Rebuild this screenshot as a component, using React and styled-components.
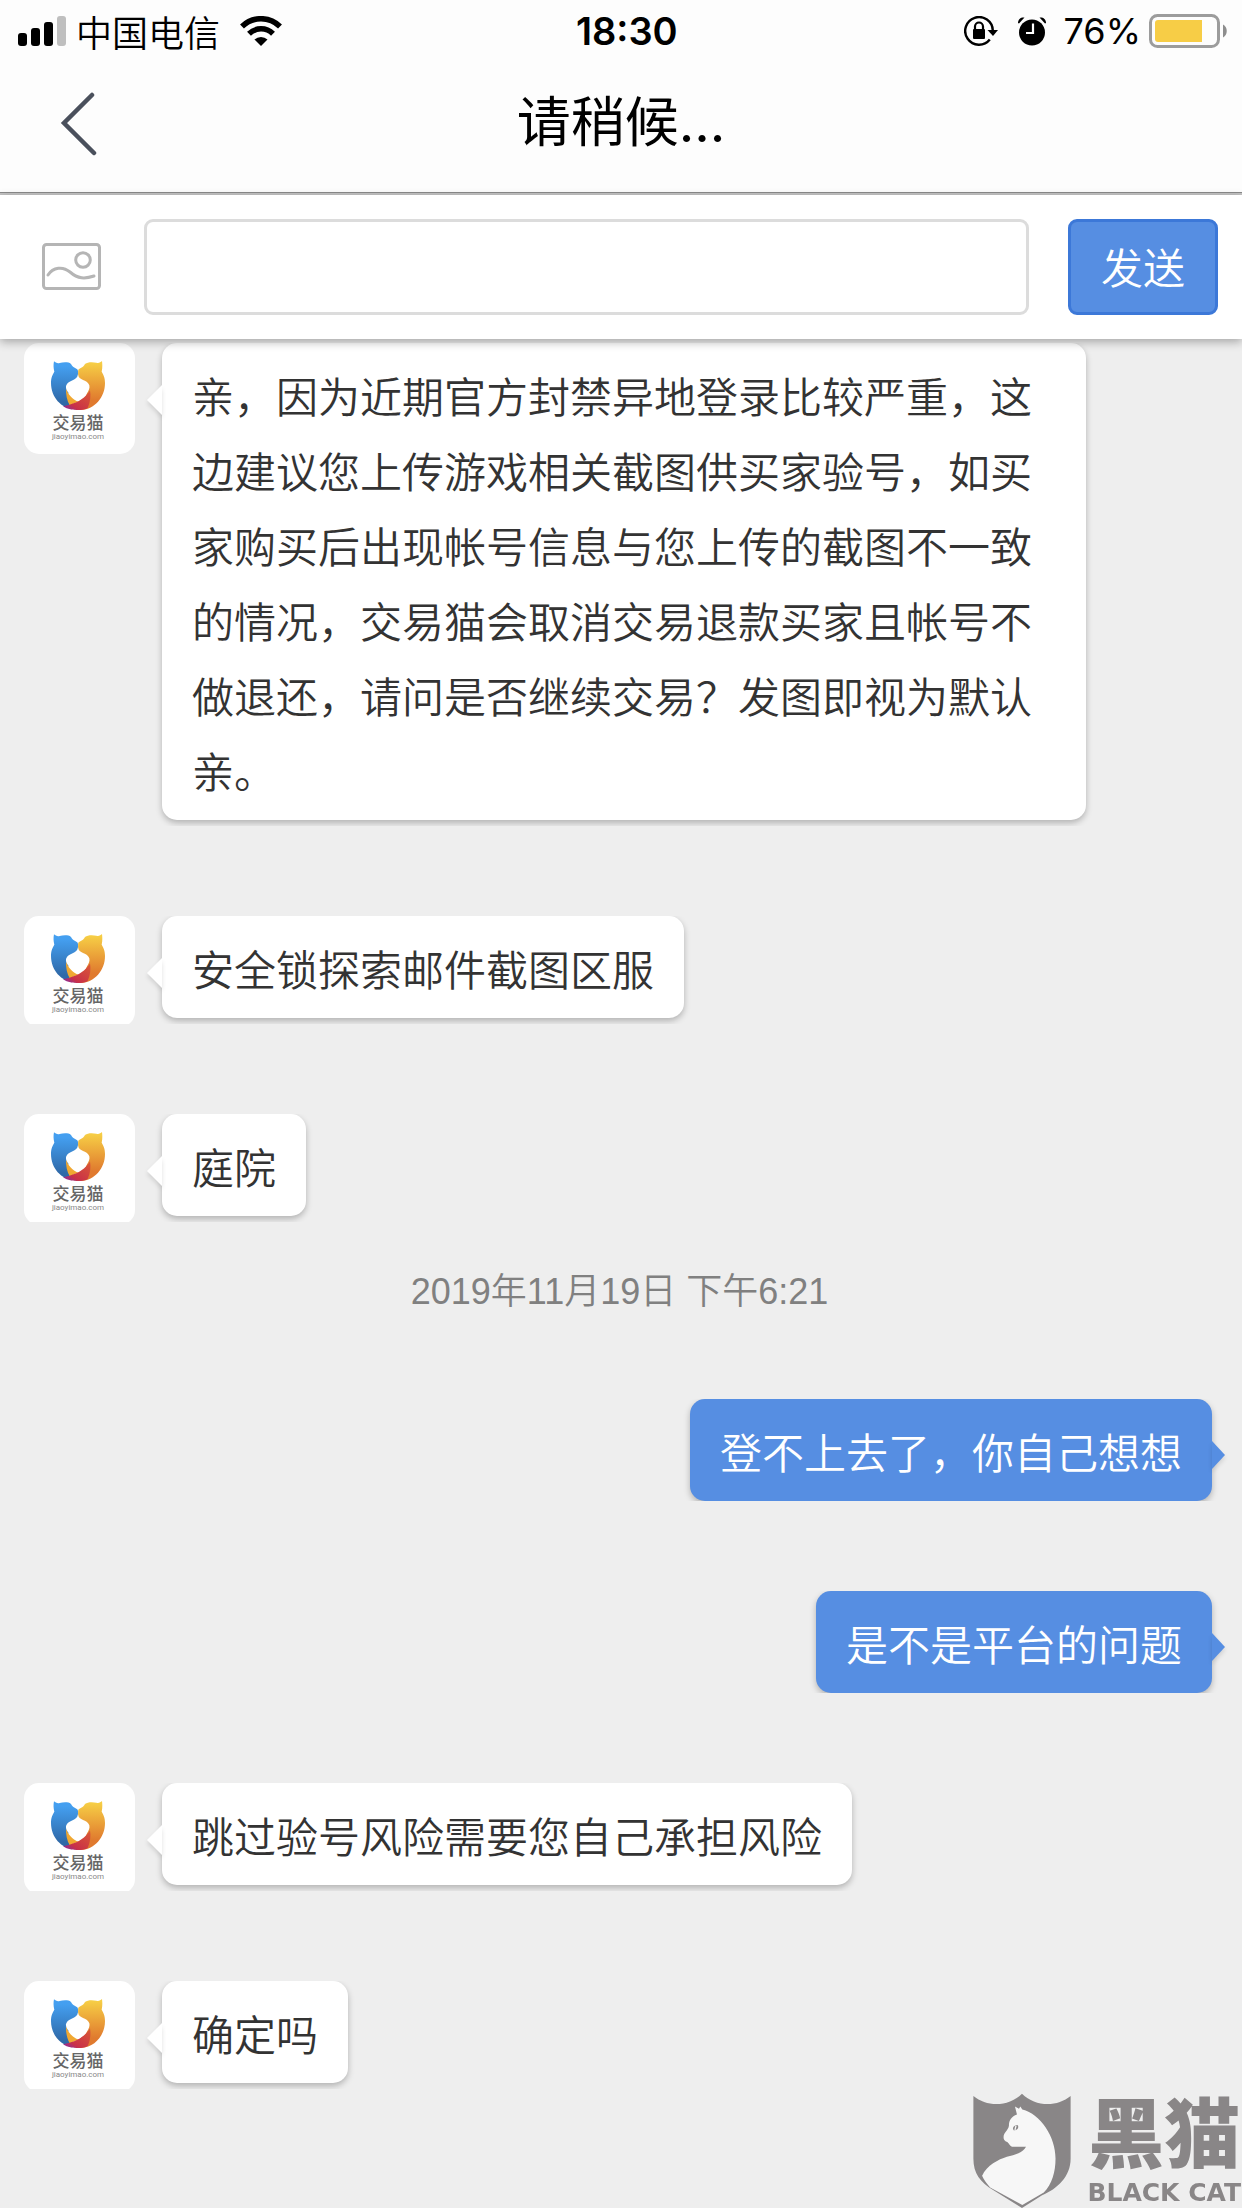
import React, { useState } from 'react';
import styled, { createGlobalStyle } from 'styled-components';

const GlobalStyle = createGlobalStyle`
    * {
        box-sizing: border-box;
    }

    body {
        margin: 0;
        background-color: #eeeeee;
        font-family: Inter, 'Noto Sans CJK SC', sans-serif;
    }

    button, input {
        font-family: inherit;
    }
`;

const Page = styled.div`
    min-height: 100vh;
    display: flex;
    flex-direction: column;
    background-color: #eeeeee;
`;

const StyledHeader = styled.header`
    background-color: #fdfdfd;
    border-bottom: 2px solid #c4c4c4;

    .status-bar {
        height: 60px;
        padding: 1px 15px 0 18px;
        display: flex;
        justify-content: space-between;
        align-items: center;
        font-size: 36px;
        line-height: 58px;
        color: #000000;
    }

    .status-group {
        display: flex;
        align-items: center;
    }

    .carrier {
        margin: 0 20px 0 10px;
        font-family: 'Noto Sans CJK SC', sans-serif;
        font-weight: 350;
    }

    .clock {
        padding-left: 8px;
        font-size: 38px;
        font-weight: 600;
    }

    .alarm {
        margin: 0 18px 0 20px;
    }

    .battery {
        margin-left: 8px;
    }

    .nav-bar {
        height: 133px;
        padding: 0 54px 6px;
        display: grid;
        grid-template-columns: 60px 1fr 60px;
        align-items: center;
        border-bottom: 1px solid #8a8a8a;
    }

    h1 {
        margin: 0;
        font-size: 54px;
        line-height: 78px;
        font-weight: 400;
        text-align: center;
        color: #000000;
    }
`;

const IconButton = styled.button`
    padding: 0;
    border: none;
    background: none;
    display: flex;
    align-items: center;
    cursor: pointer;
`;

const Composer = styled.form`
    position: relative;
    z-index: 1;
    padding: 24px 24px 24px 42px;
    display: flex;
    align-items: center;
    background-color: #ffffff;
    box-shadow: 0 3px 9px rgba(0, 0, 0, 0.3);

    input {
        flex: 1;
        min-width: 0;
        height: 96px;
        margin: 0 39px 0 43px;
        padding: 0 24px;
        border: 3px solid #dcdcdc;
        border-radius: 9px;
        font-size: 42px;
        color: #333333;
        outline: none;
    }
`;

const SendButton = styled.button`
    height: 96px;
    width: 150px;
    padding: 0 0 4px;
    border: 3px solid #3c78d8;
    border-radius: 9px;
    background-color: #568ee2;
    color: #ffffff;
    font-size: 42px;
    font-weight: 350;
    cursor: pointer;
`;

const MessageList = styled.main`
    flex: 1;
    padding-top: 4px;
    display: flex;
    flex-direction: column;
`;

const Row = styled.div`
    margin-bottom: 90px;
    padding: ${props => props.$mine ? `0 30px 0 24px` : `0 24px 6px 24px`};
    display: flex;
    justify-content: ${props => props.$mine ? `flex-end` : `flex-start`};
    align-items: flex-start;
    gap: 27px;
    overflow: hidden;
`;

const StyledAvatar = styled.div`
    flex: none;
    width: 111px;
    height: 111px;
    margin-bottom: -9px;
    padding: 18px 3px 0 0;
    border-radius: 15px;
    display: flex;
    flex-direction: column;
    align-items: center;
    background-color: #ffffff;
    font-family: 'Noto Sans CJK SC', sans-serif;
    color: #666666;

    .name {
        font-size: 17px;
        line-height: 22px;
        font-weight: 500;
    }

    .site {
        font-family: Roboto, sans-serif;
        font-size: 8px;
        line-height: 8px;
        color: #888888;
    }
`;

const Bubble = styled.p`
    position: relative;
    max-width: 924px;
    margin: 0;
    padding: 14px 30px 13px;
    border-radius: 15px;
    font-size: 42px;
    line-height: 75px;
    font-family: 'Noto Sans CJK SC', sans-serif;
    font-weight: 350;
    color: ${props => props.$mine ? `#ffffff` : `#333333`};
    background-color: ${props => props.$mine ? `#568ee2` : `#ffffff`};
    box-shadow: 0 3px 6px rgba(0, 0, 0, 0.25);

    &::after {
        content: '';
        position: absolute;
        top: 42px;
        ${props => props.$mine ? `right: -13px;` : `left: -15px;`}
        border-style: solid;
        border-color: transparent ${props => props.$mine ? `transparent transparent #568ee2` : `#ffffff transparent transparent`};
        border-width: ${props => props.$mine ? `14px 0 14px 13px` : `15px 15px 15px 0`};
        filter: drop-shadow(0 3px 2px rgba(0, 0, 0, 0.12));
    }
`;

const TimeStamp = styled.time`
    margin: -46px 0 82px;
    padding-right: 3px;
    font-family: 'Liberation Sans', 'Noto Sans CJK SC', sans-serif;
    font-size: 36px;
    font-weight: 350;
    line-height: 51px;
    text-align: center;
    color: #808080;
`;

const Watermark = styled.div`
    position: fixed;
    right: 1px;
    bottom: 0;
    display: flex;
    align-items: flex-end;
    gap: 16px;
    color: #898687;

    .words {
        display: flex;
        flex-direction: column;
        align-items: center;
    }

    .title {
        font-family: 'Liberation Sans', 'Noto Sans CJK SC', sans-serif;
        font-size: 76px;
        font-weight: 900;
        line-height: 84px;
    }

    .subtitle {
        font-family: 'DejaVu Sans', sans-serif;
        font-size: 25px;
        font-weight: 700;
        line-height: 30px;
    }
`;

const SignalIcon = () => (
    <svg width="48" height="30" viewBox="0 0 48 30" aria-hidden="true">
        <rect x="0" y="17" width="9" height="13" rx="3" />
        <rect x="13" y="12" width="9" height="18" rx="3" />
        <rect x="26" y="6" width="9" height="24" rx="3" />
        <rect x="39" y="0" width="9" height="30" rx="3" fill="#bfbfbf" />
    </svg>
);

const WifiIcon = () => (
    <svg width="42" height="30" viewBox="0 0 42 30" aria-hidden="true">
        <path d="M2 10.500 A27 27 0 0 1 40 10.500" fill="none" stroke="#000000" strokeWidth="5.500" />
        <path d="M9 17.800 A17 17 0 0 1 33 17.800" fill="none" stroke="#000000" strokeWidth="5.500" />
        <path d="M14.500 23.500 A9.500 9.500 0 0 1 27.500 23.500 L21 30 Z" />
    </svg>
);

const RotationLockIcon = () => (
    <svg width="34" height="30" viewBox="0 0 34 30" aria-hidden="true">
        <path d="M25.800 23.500 A13.800 13.800 0 1 1 28.800 14.500" fill="none" stroke="#000000" strokeWidth="2.400" />
        <path d="M23.500 14 H34 L29 20 Z" />
        <rect x="9" y="13" width="12" height="10" rx="1" />
        <path d="M11 14 V10.500 A4 4 0 0 1 19 10.500 V14" fill="none" stroke="#000000" strokeWidth="2.200" />
    </svg>
);

const AlarmIcon = () => (
    <svg className='alarm' width="28" height="30" viewBox="0 0 28 30" aria-hidden="true">
        <circle cx="14" cy="16.500" r="13" />
        <path d="M0 7 C0 3 3 1 6.500 1.500 L1 7.500 Z" />
        <path d="M28 7 C28 3 25 1 21.500 1.500 L27 7.500 Z" />
        <path d="M15 7.500 V17 H8" fill="none" stroke="#ffffff" strokeWidth="2.200" />
    </svg>
);

const BatteryIcon = () => (
    <svg className='battery' width="78" height="34" viewBox="0 0 78 34" aria-hidden="true">
        <rect x="1.500" y="1.500" width="68" height="31" rx="7" fill="none" stroke="#9c9c9c" strokeWidth="3" />
        <path d="M9 6 H53 V28 H9 C7 28 6 27 6 25 V9 C6 7 7 6 9 6 Z" fill="#f7cd46" />
        <path d="M74 10.500 C79 13 79 21 74 23.500 Z" fill="#8e8e8e" />
    </svg>
);

const BackIcon = () => (
    <svg width="50" height="66" viewBox="0 0 50 66" aria-hidden="true">
        <path d="M38 5 L10 33 L40 63" fill="none" stroke="#4a505c" strokeWidth="4.500" strokeLinecap="round" />
    </svg>
);

const PictureIcon = () => (
    <svg width="59" height="48" viewBox="0 0 59 48" fill="none" stroke="#b5b5b5" strokeWidth="3" aria-hidden="true">
        <rect x="1.500" y="1.500" width="56" height="44" rx="3" />
        <circle cx="41" cy="17" r="7.300" />
        <path d="M6 32 C11 24 21 23 28 29 C36 36 43 36 52 33" strokeLinecap="round" />
    </svg>
);

const CatLogo = () => (
    <svg width="54" height="50" viewBox="0 0 162 150" aria-hidden="true">
        <defs>
            <linearGradient id="catBlue" x1="0" y1="0" x2="0" y2="1">
                <stop offset="0.100" stopColor="#449ff0" />
                <stop offset="0.850" stopColor="#2f69a8" />
            </linearGradient>
            <linearGradient id="catOrange" x1="0" y1="0" x2="0" y2="1">
                <stop offset="0.050" stopColor="#f6cd45" />
                <stop offset="0.800" stopColor="#e07a2e" />
            </linearGradient>
            <linearGradient id="catRed" x1="1" y1="0" x2="0" y2="1">
                <stop offset="0" stopColor="#da5a35" />
                <stop offset="0.700" stopColor="#c93048" />
                <stop offset="1" stopColor="#7a2bb0" />
            </linearGradient>
        </defs>
        <path d="M9 1 C14 4 18 8 26 6 C36 4 52 2 60 9 C66 20 74 21 80 26 C82 32 81 38 80 60 L50 100 L72 145 C30 143 0 108 0 66 C0 50 4 42 10 32 C7 20 7 12 9 1 Z" fill="url(#catBlue)" />
        <path d="M153 0 C148 4 144 7 136 5 C126 3 110 2 102 9 C96 20 88 21 82 26 C81 32 81 38 82 60 L110 90 L90 147 C132 145 162 108 162 66 C162 50 158 42 152 32 C155 20 154 8 153 0 Z" fill="url(#catOrange)" />
        <path d="M45 80 C50 100 64 114 82 122 L56 133 C48 118 44 100 45 80 Z" fill="#f0a832" />
        <path d="M117 88 C104 110 82 124 56 131 L36 136 C50 146 66 147 82 147 C94 147 103 146 110 141 C118 124 120 104 117 88 Z" fill="url(#catRed)" />
        <path d="M81 40 C83 60 108 54 115 73 C119 90 100 108 82 120 C64 108 42 90 45 75 C52 56 79 60 81 40 Z" fill="#ffffff" />
    </svg>
);

const ShieldLogo = () => (
    <svg width="98" height="115" viewBox="0 0 290 343" aria-hidden="true">
        <path d="M0 9 C40 42 105 42 145 2 C185 42 250 42 290 9 V195 C290 250 250 285 205 305 L145 343 L60 290 C20 265 0 240 0 195 Z" fill="#898687" />
        <path d="M124 40 L136 47 L140 40 L146 49 C200 62 245 130 245 195 C245 235 235 270 210 297 L146 334 L50 282 C40 270 30 258 26 247 C40 215 75 198 100 190 C125 184 148 178 157 160 H115 C108 158 106 150 102 147 C92 143 90 138 90 132 C90 118 104 112 106 98 C106 80 114 70 130 64 Z" fill="#f7f7f7" />
        <path d="M118 106 C119 97 127 96 133 96 C136 106 130 111 120 111 Z" fill="#898687" />
        <path d="M127 98 L124 110" stroke="#f7f7f7" strokeWidth="4" />
    </svg>
);

const Avatar = () => (
    <StyledAvatar>
        <CatLogo />
        <span className='name'>交易猫</span>
        <span className='site'>jiaoyimao.com</span>
    </StyledAvatar>
);

const Message = ({ mine, children }) => (
    <Row $mine={mine}>
        {!mine && <Avatar />}
        <Bubble $mine={mine}>{children}</Bubble>
    </Row>
);

const App = () => {

    const [draft, setDraft] = useState('');

    const handleSend = (e) => {
        e.preventDefault();
        setDraft('');
    }

    return (
        <Page>
            <GlobalStyle />
            <StyledHeader>
                <div className='status-bar'>
                    <div className='status-group'>
                        <SignalIcon />
                        <span className='carrier'>中国电信</span>
                        <WifiIcon />
                    </div>
                    <span className='clock'>18:30</span>
                    <div className='status-group'>
                        <RotationLockIcon />
                        <AlarmIcon />
                        <span>76%</span>
                        <BatteryIcon />
                    </div>
                </div>
                <div className='nav-bar'>
                    <IconButton type='button' aria-label='返回'>
                        <BackIcon />
                    </IconButton>
                    <h1>请稍候...</h1>
                </div>
            </StyledHeader>
            <Composer onSubmit={handleSend}>
                <IconButton type='button' aria-label='图片'>
                    <PictureIcon />
                </IconButton>
                <input type='text' aria-label='消息' value={draft} onChange={(e) => setDraft(e.target.value)} />
                <SendButton type='submit'>发送</SendButton>
            </Composer>
            <MessageList>
                <Message>亲，因为近期官方封禁异地登录比较严重，这边建议您上传游戏相关截图供买家验号，如买家购买后出现帐号信息与您上传的截图不一致的情况，交易猫会取消交易退款买家且帐号不做退还，请问是否继续交易？发图即视为默认亲。</Message>
                <Message>安全锁探索邮件截图区服</Message>
                <Message>庭院</Message>
                <TimeStamp dateTime='2019-11-19T18:21'>2019年11月19日 下午6:21</TimeStamp>
                <Message mine>登不上去了，你自己想想</Message>
                <Message mine>是不是平台的问题</Message>
                <Message>跳过验号风险需要您自己承担风险</Message>
                <Message>确定吗</Message>
            </MessageList>
            <Watermark>
                <ShieldLogo />
                <div className='words'>
                    <span className='title'>黑猫</span>
                    <span className='subtitle'>BLACK CAT</span>
                </div>
            </Watermark>
        </Page>
    );
}

export default App;
